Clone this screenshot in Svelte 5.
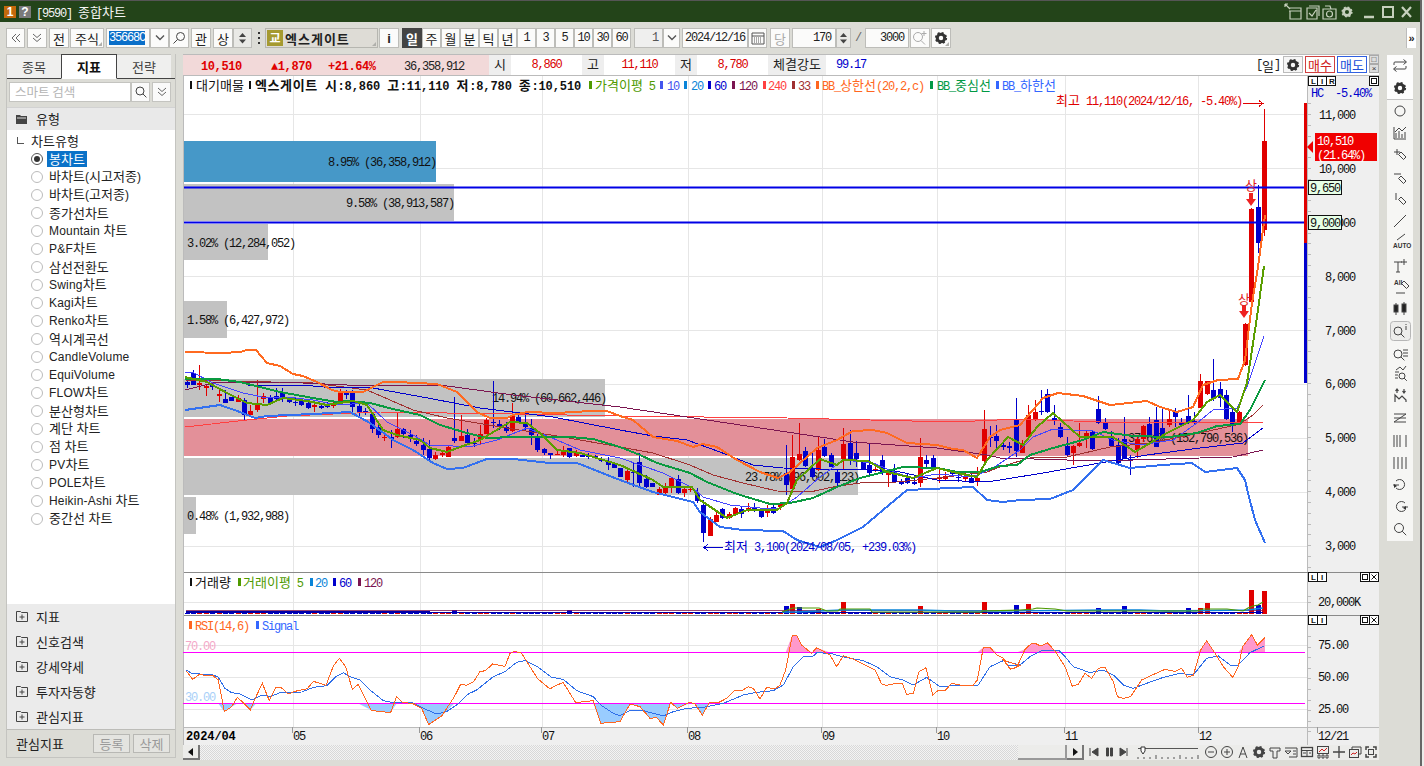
<script>
  const parse = (s) => s.trim().split(/\s+/).map((p) => p.split(',').map(Number));
  const pts = (arr) => arr.map((p) => p.join(',')).join(' ');
  const zoomPts = (s, ox, oy) => parse(s).map(([x, y]) => [ox + x / 3, oy + y / 3]);

  function parts(s) {
    return (s.match(/[\uAC00-\uD7A3]+|[^\uAC00-\uD7A3]+/g) || []).map((t) => ({
      t,
      k: /[\uAC00-\uD7A3]/.test(t)
    }));
  }

  const bbUp = parse(`185,352 223,353 240,352 247,350 256,350 267,363 280,366 293,374 303,376 317,382 332,390 340,392 363,392 383,382 397,382 437,384 457,392 467,402 477,412 490,418 507,418 513,415 527,412 557,413 590,411 607,411 620,416 633,420 653,437 677,441 693,447 703,444 717,447 737,460 760,472 778,478 790,472 817,448 837,440 853,431 873,430 887,433 907,443 937,445 953,449 963,450 977,458 990,437 1000,430 1020,425 1033,410 1043,398 1058,393 1083,396 1110,405 1147,401 1160,407 1177,412 1193,407 1203,385 1218,380 1238,379 1245,360 1252,303 1258,267 1265,215`);
  const bbMid = parse(`185,379 217,379 240,382 280,392 313,398 337,402 350,401 370,403 393,409 420,415 440,425 467,433 487,438 513,437 570,437 593,439 620,447 640,455 657,463 690,473 707,482 737,494 770,504 790,503 813,498 837,487 860,478 880,473 903,467 937,468 957,472 980,472 1000,466 1017,465 1030,455 1053,448 1083,440 1103,432 1133,436 1170,437 1197,433 1217,426 1240,424 1250,410 1265,380`);
  const bbLow = parse(`185,410 220,405 240,412 255,418 267,416 313,414 350,412 370,423 393,440 413,450 433,463 447,469 463,468 487,459 513,459 550,463 577,463 620,480 653,492 693,502 700,512 720,527 743,530 783,531 797,540 820,547 837,540 863,527 883,510 907,490 973,487 987,500 1003,502 1020,500 1050,499 1073,490 1090,473 1103,460 1130,468 1163,465 1192,463 1205,472 1237,468 1245,480 1248,493 1255,520 1265,543`);
  const ma5 = parse(`185,377 207,382 227,393 247,403 267,405 283,398 307,401 327,405 353,401 367,405 383,430 397,435 420,440 430,448 447,452 463,446 480,440 510,422 527,423 540,433 557,450 580,453 620,465 653,480 663,487 692,487 700,500 727,518 747,510 777,510 787,503 797,480 820,459 837,465 843,460 868,461 887,472 913,478 937,468 957,473 977,477 987,460 1008,437 1023,445 1037,427 1053,413 1080,437 1100,437 1113,437 1135,452 1167,433 1193,420 1207,402 1220,395 1237,412 1247,383 1257,317 1264,266`);
  const ma10 = parse(`185,372 192,372 213,383 243,393 267,398 287,397 313,400 337,405 367,403 387,422 413,435 430,445 453,446 473,446 497,440 527,428 557,440 580,450 620,458 663,473 693,488 703,497 730,505 760,508 780,508 797,497 820,477 843,460 873,463 897,473 913,478 937,474 973,477 993,468 1020,450 1033,437 1053,429 1093,431 1113,440 1140,445 1173,440 1197,423 1213,410 1237,408 1247,387 1264,336`);
  const ma60 = parse(`248,385 303,385 323,387 373,388 433,399 480,408 553,417 620,430 653,436 687,440 720,452 753,465 783,468 820,469 853,469 900,472 937,480 987,482 1000,480 1043,473 1100,463 1147,455 1200,448 1243,443 1263,428`);
  const ma120 = parse(`185,390 213,383 280,382 347,385 440,385 513,395 620,407 687,417 787,432 853,442 937,448 987,455 1000,458 1100,461 1233,457 1263,450`);
  const ma240 = parse(`185,427 247,420 287,416 380,412 513,414 620,416 787,418 953,422 1020,419 1100,422 1233,423 1263,422`);
  const ma33 = parse(`185,380 313,383 367,390 413,410 447,418 513,429 563,437 620,447 653,453 690,465 713,475 743,483 777,491 810,492 833,487 860,483 897,482 937,478 987,472 1000,467 1033,457 1067,457 1110,447 1150,443 1200,433 1240,424 1253,415 1263,405`);

  const raw1 = `b125,135,115,145 b100,135,90,135 r128,135,75,150 r138,142,135,168 b135,140,125,150 r162,165,150,185 b177,188,150,190 b172,182,170,184 r175,185,165,185 b180,225,175,240 r212,225,195,230 r190,210,120,215 r167,178,160,190 b170,192,165,195 b168,176,145,180 b158,178,145,185 b178,186,176,188 b185,188,175,198 b183,195,175,198 b190,203,185,208 r195,200,185,215 b197,205,195,207 b197,200,185,205 r192,197,185,205 r160,183,148,190 b160,165,150,178 b160,200,150,215 b197,215,190,230 b212,217,205,225 b222,267,215,278 b262,285,245,295 r290,295,280,303 b292,298,270,325 r267,292,215,295 b267,283,265,295 b285,295,270,305 b302,312,285,318 b315,330,295,345 b328,355,300,360 r345,358,337,360 r340,346,330,350 r322,350,315,352 b295,303,170,310 r288,302,225,304 b285,308,268,310 b308,312,295,322 r282,297,255,312 r240,282,235,282 b245,250,122,265 b253,258,240,270 b262,272,245,280 r228,272,190,275 b232,245,218,250 b250,260,220,270 b263,285,237,315 b290,330,283,335 b326,338,325,345 b340,343,338,358 r341,344,328,346 r332,345,318,350 b325,352,323,354 r338,349,330,352 b345,350,343,352 b345,350,340,358 b347,350,345,352 b357,360,350,365 b362,375,350,390 b373,383,371,385 b385,410,383,412
  r392,420,388,425 b395,398,370,440 b365,430,340,440 b418,440,405,445 b430,440,428,442 r448,465,442,465 r445,458,430,465 r415,445,410,458 b417,458,405,462 r447,458,440,472 r446,449,437,455 b460,482,445,488 b495,578,480,605 r537,587,530,588 r525,545,510,547 b507,535,505,538 r522,535,515,538 r505,525,500,525 b507,522,497,533 r505,512,488,515 b503,510,490,515 b510,532,505,535 r510,520,495,530 b502,520,495,523 r488,502,485,510 b400,435,315,465 r350,447,285,448 r342,360,248,362 b333,378,320,380 b385,410,333,415 r330,390,290,392 b322,347,297,350 b345,380,340,382 b397,430,390,442 r312,358,265,390 b310,360,270,375 b340,358,303,380 b367,388,360,390 b375,400,313,408 r387,393,380,397 b360,400,345,405 r399,401,395,442 b402,426,373,427 b422,432,418,436 b415,430,402,432 b426,432,415,435 r350,428,295,440 b360,372,345,385 b353,382,345,385 r410,417,380,428 r408,416,395,420 b395,402,393,404 b410,415,400,425 r412,418,395,425 b415,428,395,430 r415,425,380,438 r267,362,210,365 b290,295,258,320 b287,303,255,325 b315,318,300,330 b318,320,305,340 b238,333,175,350`;
  const raw2 = `r1065,1088,1050,1090 r975,1040,945,1042 r965,990,930,992 b962,965,900,975 b912,965,897,968 b985,992,945,1005 b1010,1040,998,1045 b1068,1095,1040,1097 r1068,1090,1065,1125 r1060,1068,998,1072 r1030,1045,1022,1075 b1025,1077,1020,1080 b957,1000,918,1003 b995,1018,985,1020 b1040,1068,1022,1070 b1065,1120,1045,1122 b1048,1107,982,1108 b1107,1110,1095,1155 r1047,1080,1035,1105 r1008,1048,1005,1055 b1002,1040,982,1042 b990,1070,952,1072 b1015,1040,955,1042 r988,1005,960,1010 b965,982,955,1012 b998,1006,985,1010 b978,1000,915,1003 b992,1000,965,1005 r873,953,852,955 r873,913,872,915 b900,928,808,932 b898,925,875,950 b915,988,900,990 b965,1005,952,1025 r965,1003,963,1005 r702,825,700,828 r358,635,355,637 b350,458,285,488 r153,420,57,437`;
  const candleOf = (tok, oy) => {
    const n = tok.slice(1).split(',').map(Number);
    return { c: tok[0], t: oy + n[0] / 3, b: oy + n[1] / 3, wt: oy + n[2] / 3, wb: oy + n[3] / 3 };
  };
  const candles = [
    ...raw1.trim().split(/\s+/).map((t) => candleOf(t, 340)),
    ...raw2.trim().split(/\s+/).map((t) => candleOf(t, 90))
  ].map((c, i) => ({ ...c, x: Math.round(186.7 + i * 6.376) }));
  const up = '#e00000';
  const dn = '#0000cc';

  const volBig = { 42: 3, 60: 3, 94: 7, 95: 9, 96: 6, 99: 4, 103: 11, 115: 7, 125: 11, 130: 8, 132: 9, 143: 5, 147: 7, 157: 5, 159: 5, 160: 10, 167: 23, 168: 8, 169: 22 };
  const volBars = candles.map((c, i) => ({ x: c.x, c: i === 96 || i === 168 ? dn : c.c === 'r' ? up : dn, h: volBig[i] || 0 }));

  const rsi = [
    ...zoomPts(`18,302 38,328 60,312 78,318 98,316 115,330 133,425 155,410 172,382 192,400 211,420 228,380 247,340 268,392 287,352 305,354 325,372 345,364 382,356 400,334 438,346 460,288 478,265 497,290 517,358 535,343 573,420 600,425 632,427 650,380 668,398 697,400 725,415 746,464 785,438 823,380 842,343 860,346 880,336 900,305 916,302 938,282 975,289 990,250 1005,244 1025,250 1072,325 1110,357 1130,345 1150,338 1187,398 1240,392 1262,460 1320,455`, 180, 570),
    ...zoomPts(`30,402 60,410 90,445 110,443 130,465 152,397 172,415 208,397 225,402 247,435 268,398 295,398 320,385 345,360 365,362 385,350 400,355 420,387 440,352 465,357 480,345 497,300 517,195 530,197 545,225 575,250 590,233 630,255 650,290 670,257 700,267 740,287 765,300 785,342 800,346 830,340 847,340 860,373 880,370 897,305 918,293 938,375 955,361 975,362 995,340 1020,345 1060,345 1072,330 1090,232 1110,232 1130,255 1150,265 1170,298 1200,287`, 620, 570),
    ...zoomPts(`10,270 30,297 50,293 75,238 95,220 105,220 122,228 142,218 165,243 195,290 217,349 235,343 255,310 275,325 295,295 315,292 340,335 352,380 370,385 392,380 425,330 450,318 495,298 525,304 545,295 562,322 580,316 602,240 620,212 645,250 670,290 698,322 715,290 728,230 755,194 772,225 795,202`, 1000, 570)
  ];
  const signal = [
    ...zoomPts(`18,300 35,310 70,313 100,315 115,322 135,355 155,368 180,372 215,390 245,375 270,380 300,368 365,366 400,352 440,347 470,318 490,308 510,320 540,330 570,360 610,392 640,398 697,398 730,415 770,432 800,425 830,405 865,372 890,360 940,320 975,305 1010,277 1035,272 1075,292 1115,322 1150,328 1190,362 1240,380 1262,405 1300,430 1320,437`, 180, 570),
    ...zoomPts(`30,422 70,422 130,438 160,425 200,415 250,412 310,400 370,375 410,367 460,362 490,345 520,290 550,260 580,258 590,248 630,250 680,263 730,272 770,290 810,320 850,330 880,345 920,322 960,350 1000,347 1075,345 1110,290 1150,272 1200,285`, 620, 570),
    ...zoomPts(`25,285 60,285 90,260 130,240 175,240 195,260 220,290 270,308 310,300 340,315 370,345 400,355 440,340 490,322 540,310 580,315 620,265 655,258 690,285 715,285 750,248 792,228`, 1000, 570)
  ];
  const rsiHi = [[rsi[0][0], 652.5], ...rsi.map(([x, y]) => [x, Math.min(y, 652.5)]), [rsi[rsi.length - 1][0], 652.5]];
  const rsiLo = [[rsi[0][0], 703.5], ...rsi.map(([x, y]) => [x, Math.max(y, 703.5)]), [rsi[rsi.length - 1][0], 703.5]];

  const vGreen = parse(`782,612 790,609 793,608 819,608 827,611 838,611 840,609 870,609 872,612 982,612 982,611 1020,610 1033,609 1037,608 1055,609 1067,611 1197,611 1203,609 1227,609 1243,611 1248,608 1253,606 1258,605 1263,602`);
  const vSky = parse(`782,612 797,612 842,610 920,610 953,611 1000,611 1107,610 1140,610 1167,611 1247,610 1263,608`);

  const vGrid = [293, 420, 542, 688, 822, 937, 1065, 1198];
  const hGrid = [114, 168, 222, 276, 330, 384, 438, 492, 546];
  const priceLabels = [[119, '11,000'], [173, '10,000'], [227, '9,000'], [281, '8,000'], [335, '7,000'], [388, '6,000'], [442, '5,000'], [496, '4,000'], [550, '3,000']];
  const priceTicks = Array.from({ length: 44 }, (_, i) => 103.2 + i * 10.78);
  const rsiTicks = Array.from({ length: 10 }, (_, i) => 636 + i * 10.6);
  const dateLabels = [[293, '05'], [420, '06'], [542, '07'], [688, '08'], [822, '09'], [937, '10'], [1065, '11'], [1199, '12'], [1318, '12/21']];

  const bands = [
    { x: 183, y: 141, w: 253, h: 41, f: '#4698c8', tx: 328, label: '8.95% (36,358,912)' },
    { x: 183, y: 184, w: 271, h: 37, f: '#c2c2c2', tx: 346, label: '9.58% (38,913,587)' },
    { x: 183, y: 224, w: 85, h: 36, f: '#c2c2c2', tx: 187, label: '3.02% (12,284,052)' },
    { x: 183, y: 301, w: 44, h: 37, f: '#c2c2c2', tx: 187, label: '1.58% (6,427,972)' },
    { x: 183, y: 379, w: 422, h: 38, f: '#c2c2c2', tx: 492, label: '14.94% (60,662,446)' },
    { x: 183, y: 419, w: 1065, h: 37, f: '#e39099', tx: 1128, label: '37.61% (152,790,536)' },
    { x: 183, y: 458, w: 675, h: 37, f: '#c2c2c2', tx: 745, label: '23.78% (96,602,123)' },
    { x: 183, y: 497, w: 13, h: 37, f: '#c2c2c2', tx: 187, label: '0.48% (1,932,988)' }
  ];

  const legendMain = [
    [589, 595, '#4f9a00', '가격이평 5'],
    [660, 667, '#4455ee', '10'],
    [684, 691, '#0a84d8', '20'],
    [708, 714, '#0000cc', '60'],
    [732, 739, '#7b1550', '120'],
    [763, 768, '#ff4040', '240'],
    [792, 798, '#a03030', '33'],
    [816, 822, '#ff6620', 'BB_상한선(20,2,c)'],
    [930, 937, '#009944', 'BB_중심선'],
    [996, 1002, '#3366ff', 'BB_하한선']
  ];
  const legendVol = [
    [238, 243, '#4f9a00', '거래이평 5'],
    [310, 315, '#0a84d8', '20'],
    [333, 339, '#0000cc', '60'],
    [358, 364, '#7b1550', '120']
  ];

  const tree = ['봉차트', '바차트(시고저종)', '바차트(고저종)', '종가선차트', 'Mountain 차트', 'P&F차트', '삼선전환도', 'Swing차트', 'Kagi차트', 'Renko차트', '역시계곡선', 'CandleVolume', 'EquiVolume', 'FLOW차트', '분산형차트', '계단 차트', '점 차트', 'PV차트', 'POLE차트', 'Heikin-Ashi 차트', '중간선 차트'];
  const accordion = ['지표', '신호검색', '강세약세', '투자자동향', '관심지표'];
  const periods = ['주', '월', '분', '틱', '년'];
  const minutes = ['1', '3', '5', '10', '30', '60'];
</script>

{#snippet t(s)}{#each parts(s) as p}<span class={p.k ? 'kr' : 'num'}>{p.t}</span>{/each}{/snippet}

{#snippet st(x, y, s, fill, cls = '')}
  <text {x} {y} {fill} class="svgt {cls}">{#each parts(s) as p}<tspan class={p.k ? 'kr' : 'num'}>{p.t}</tspan>{/each}</text>
{/snippet}

{#snippet gear(cx, cy, r, col)}
  <circle {cx} {cy} r={r * 0.62} fill="none" stroke={col} stroke-width={r * 0.5} />
  <circle {cx} {cy} r={r * 0.87} fill="none" stroke={col} stroke-width={r * 0.3} stroke-dasharray={(2 * Math.PI * r * 0.87) / 16} />
{/snippet}

{#snippet arrows()}
  <svg class="ar" width="9" height="16" viewBox="0 0 9 16"><path d="M1 7l3.5-4L8 7zM1 9.500l3.500 4L8 9.500z" fill="#444" /></svg>
{/snippet}

{#snippet chev()}
  <svg width="10" height="8" viewBox="0 0 10 8"><path d="M1 1.500l4 4 4-4" fill="none" stroke="#555" stroke-width="1.400" /></svg>
{/snippet}

{#snippet dbl(up)}
  <svg width="10" height="10" viewBox="0 0 10 10">
    {#if up === 'l'}
      <path d="M5 1L1 5l4 4M9 1L5 5l4 4" fill="none" stroke="#666" />
    {:else if up === 'r'}
      <path d="M1 1l4 4-4 4M5 1l4 4-4 4" fill="none" stroke="#333" stroke-width="1.200" />
    {:else}
      <path d="M1 1l4 3.500L9 1M1 5l4 3.500L9 5" fill="none" stroke="#666" />
    {/if}
  </svg>
{/snippet}

{#snippet mag(cx, cy, r, sw)}
  <circle {cx} {cy} {r} fill="none" stroke="#444" stroke-width={sw} />
  <path d="M{cx + r * 0.7} {cy + r * 0.7}l{r * 0.9} {r * 0.9}" stroke="#444" stroke-width={sw} />
{/snippet}

{#snippet eraser(x, y)}
  <path d="M{x} {y}l5 5-2.500 2.500-5-5z" fill="none" stroke="#444" />
{/snippet}

<div class="page">
  <div class="win">
    <header class="title">
      <span class="sq one">1</span>
      <span class="sq q">?</span>
      <span class="ttl">{@render t('[9590] 종합차트')}</span>
      <div class="winbtns">
        <svg width="132" height="18" viewBox="0 0 132 18">
          <g fill="none" stroke="#c6d0bd" stroke-width="1.200">
            <path d="M6 5h12v11H7V8M6 8h12M2 1l5 5M2 1h3M2 1v3" />
            <path d="M24 5h10v11H24zM26 3h10v10M26 10l3 3 4-6" />
            <path d="M40 6h13v10H40zM42 3h5l1 3" /><circle cx="46.500" cy="11" r="3" />
          </g>
          {@render gear(64, 9, 5.500, '#c6d0bd')}
          <path d="M81 14h10" stroke="#c6d0bd" stroke-width="2.500" />
          <rect x="100" y="4" width="10" height="10" fill="none" stroke="#c6d0bd" stroke-width="2" />
          <path d="M119 4l9 10M128 4l-9 10" stroke="#c6d0bd" stroke-width="2.200" />
        </svg>
      </div>
    </header>

    <div class="toolbar">
      <div class="btn w19">{@render dbl('l')}</div>
      <div class="btn w20 ml2">{@render dbl('d')}</div>
      <div class="btn w20 ml2">{@render t('전')}</div>
      <div class="btn w34 ml1 corner">{@render t('주식')}</div>
      <div class="btn w44 ml2 code"><span class="sel">35668C</span></div>
      <div class="btn w19">{@render chev()}</div>
      <div class="btn w20">
        <svg width="14" height="14" viewBox="0 0 14 14"><circle cx="8.500" cy="5.500" r="4" fill="none" stroke="#444" /><path d="M5.500 8.500L1.500 12.500" stroke="#444" /></svg>
      </div>
      <div class="btn w20 ml2">{@render t('관')}</div>
      <div class="btn w20 ml2">{@render t('상')}</div>
      <div class="btn w19 spin">{@render arrows()}</div>
      <div class="dots"><i></i><i></i><i></i></div>
      <div class="stock corner">
        <span class="kyo">교</span><b class="kr">엑스게이트</b>
      </div>
      <div class="btn w20 ml1 info">i</div>
      <div class="btn w20 ml3 dark">{@render t('일')}</div>
      {#each periods as p}<div class="btn w19">{@render t(p)}</div>{/each}
      {#each minutes as m}<div class="btn w19">{@render t(m)}</div>{/each}
      <div class="btn w29 ml3 grayin rightnum">{@render t('1')}</div>
      <div class="btn w17">{@render chev()}</div>
      <div class="btn w66 ml2">{@render t('2024/12/16')}</div>
      <div class="btn w19">
        <svg width="14" height="13" viewBox="0 0 14 13"><path d="M1 1h12v11H1zM1 4h12" fill="none" stroke="#555" /><path d="M3 6h8M3 8h8M3 10h8" stroke="#555" stroke-dasharray="1 1" /></svg>
      </div>
      <div class="btn w20 ml3 mute">{@render t('당')}</div>
      <div class="btn w44 ml2 rightnum">{@render t('170')}</div>
      <div class="btn w15 spin">{@render arrows()}</div>
      <div class="slash">{@render t('/')}</div>
      <div class="btn w44 rightnum">{@render t('3000')}</div>
      <div class="btn w20 ml1">
        <svg width="18" height="16" viewBox="0 0 18 16"><circle cx="7" cy="7" r="4.500" fill="none" stroke="#aaa" /><path d="M10 10.500l4 4M13 1v5M10.500 3.500h5" stroke="#aaa" /></svg>
      </div>
      <div class="btn w20 ml1 corner">
        <svg width="14" height="14" viewBox="0 0 14 14">{@render gear(7, 7, 6, '#333')}</svg>
      </div>
      <div class="more">»</div>
    </div>

    <div class="body">
      <aside class="side">
        <div class="tabs">
          <div class="tab">{@render t('종목')}</div>
          <div class="tab on">{@render t('지표')}</div>
          <div class="tab">{@render t('전략')}</div>
          <div class="tabrest"></div>
        </div>
        <div class="search">
          <div class="sinput">스마트 검색</div>
          <div class="sbtn">
            <svg width="14" height="14" viewBox="0 0 14 14">{@render mag(6, 6, 4, 1)}</svg>
          </div>
          <div class="sbtn alt">{@render dbl('d')}</div>
        </div>
        <div class="treehead">
          <svg width="11" height="10" viewBox="0 0 11 10"><path d="M0 1h4l1 1h6v8H0z" fill="#444" /><path d="M1 4h9" stroke="#ddd" /></svg>
          <span class="kr">유형</span>
        </div>
        <div class="tree">
          <div class="root"><span class="elbow"></span><span class="kr">차트유형</span></div>
          {#each tree as item, i}
            <div class="item">
              <span class="radio" class:checked={i === 0}></span>
              <span class="lbl" class:sel={i === 0}>{#each parts(item) as p}<span class={p.k ? 'kr' : 'lat'}>{p.t}</span>{/each}</span>
            </div>
          {/each}
        </div>
        <div class="acc">
          {#each accordion as a}
            <div class="accrow">
              <svg width="12" height="11" viewBox="0 0 12 11"><path d="M.5 .5h4l1 1h6v9H.5zM6 3.500v5M3.500 6h5" fill="none" stroke="#444" /></svg>
              <span class="kr">{a}</span>
            </div>
          {/each}
        </div>
        <div class="sidefoot">
          <span class="kr">관심지표</span>
          <div class="fbtn kr">등록</div>
          <div class="fbtn kr">삭제</div>
        </div>
      </aside>

      <main class="chart">
        <div class="infobar">
          <div class="quote">
            <span class="q1">{@render t('10,510')}</span>
            <span class="q2">{@render t('▲1,870')}</span>
            <span class="q3">{@render t('+21.64%')}</span>
            <span class="q4">{@render t('36,358,912')}</span>
          </div>
          <div class="cell key w22 kr">시</div><div class="cell val w71 red">{@render t('8,860')}</div>
          <div class="cell key w22 kr">고</div><div class="cell val w71 red">{@render t('11,110')}</div>
          <div class="cell key w22 kr">저</div><div class="cell val w71 red">{@render t('8,780')}</div>
          <div class="cell key w58 kr">체결강도</div><div class="cell val w50 blue">{@render t('99.17')}</div>
          <div class="fill"></div>
          <div class="ilabel">{@render t('[일]')}</div>
          <div class="ibtn">
            <svg width="14" height="14" viewBox="0 0 14 14">{@render gear(7, 7, 6, '#333')}</svg>
          </div>
          <div class="ibtn buy kr">매수</div>
          <div class="ibtn sell kr">매도</div>
          <div class="mini">
            <span class="mb">□</span>
            <span class="mb">×</span>
          </div>
        </div>

        <svg class="plot" width="1196" height="670" viewBox="183 75 1196 670">
          <rect x="183" y="75" width="1196" height="670" fill="#fff" />
          <rect x="1308" y="76" width="71" height="669" fill="#efefef" />
          <rect x="183" y="728" width="1125" height="17" fill="#efefef" />

          <g stroke="#e6e6e6" shape-rendering="crispEdges">
            {#each vGrid as x}<path d="M{x + 0.5} 76V727" />{/each}
            {#each hGrid as y}<path d="M183 {y + 0.5}H1307" />{/each}
            <path d="M183 602.500H1307M183 645.500H1307M183 677.500H1307M183 709.500H1307" />
          </g>

          {#each bands as b}
            <rect x={b.x} y={b.y} width={b.w} height={b.h} fill={b.f} shape-rendering="crispEdges" />
          {/each}
          {#each bands as b}
            {@render st(b.tx, b.y + (b.h === 41 ? 25 : 23), b.label, '#111')}
          {/each}

          <g shape-rendering="crispEdges">
            {#each candles as c}
              <path d="M{c.x + 0.5} {c.wt}V{c.wb}" stroke={c.c === 'r' ? up : dn} stroke-width="1" />
              <rect x={c.x - 2} y={c.t} width="5" height={Math.max(c.b - c.t, 1.5)} fill={c.c === 'r' ? up : dn} />
            {/each}
          </g>

          <g fill="none" stroke-linejoin="round" shape-rendering="crispEdges">
            <polyline points={pts(ma240)} stroke="#ff4040" stroke-width="1" />
            <polyline points={pts(ma33)} stroke="#a03030" stroke-width="1" />
            <polyline points={pts(ma120)} stroke="#7b1550" stroke-width="1" />
            <polyline points={pts(ma60)} stroke="#0000cc" stroke-width="1" />
            <polyline points={pts(ma10)} stroke="#4444ff" stroke-width="1" />
            <polyline points={pts(bbLow)} stroke="#3370f0" stroke-width="2" />
            <polyline points={pts(bbMid)} stroke="#0a9a40" stroke-width="2" />
            <polyline points={pts(ma5)} stroke="#5a9e00" stroke-width="2" />
            <polyline points={pts(bbUp)} stroke="#ff6a20" stroke-width="2" />
          </g>

          <path d="M183 187.500H1307M183 222.500H1307" stroke="#0000e6" stroke-width="2" />
          <rect x="1304" y="103" width="3" height="140" fill="#e00000" />
          <rect x="1304" y="243" width="3" height="140" fill="#0000cc" />

          <path d="M1244 311l3 0v-6h4v6h3l-5 7z" fill="#ee2222" transform="translate(-5 0)" />
          <path d="M1251 199h3v-6h4v6h3l-5 7z" fill="#ee2222" transform="translate(-5 0)" />
          {@render st(1238, 304, '상', '#e02020')}
          {@render st(1245, 190, '상', '#e02020')}

          <g stroke="#bbb" shape-rendering="crispEdges">
            <path d="M1307.500 75V745M183 727.500H1379M183 75.500H1379" />
            {#each priceTicks as y}<path d="M1307 {Math.round(y) + 0.5}h4" />{/each}
            {#each rsiTicks as y}<path d="M1307 {Math.round(y) + 0.5}h4" />{/each}
            <path d="M1307 596.500h4M1307 602.500h4" />
          </g>
          <path d="M183 572.500H1379M183 615.500H1379" stroke="#8a8a8a" shape-rendering="crispEdges" />
          <path d="M183.500 75V745" stroke="#bbb" shape-rendering="crispEdges" />

          <!-- legend -->
          <rect x="190" y="81" width="2" height="8" fill="#111" />
          {@render st(196, 90, '대기매물', '#111')}
          <rect x="249" y="81" width="2" height="8" fill="#111" />
          {@render st(255, 90, '엑스게이트 시:8,860 고:11,110 저:8,780 종:10,510', '#111', 'bold')}
          {#each legendMain as [rx, tx, col, s]}
            <rect x={rx} y="81" width="3" height="8" fill={col} />
            {@render st(tx, 90, s, col)}
          {/each}
          {@render st(1056, 105, '최고 11,110(2024/12/16, -5.40%)', '#e00000')}
          <path d="M1243 103.500H1263M1259 100.500l4 3-4 3" stroke="#e00000" fill="none" shape-rendering="crispEdges" />
          {@render st(724, 551, '최저 3,100(2024/08/05, +239.03%)', '#0000cc')}
          <path d="M704 547.500H723M708 544.500l-4 3 4 3" stroke="#0000cc" fill="none" shape-rendering="crispEdges" />

          <!-- price axis -->
          {#each priceLabels as [y, s]}
            <text x="1355" {y} text-anchor="end" class="svgt"><tspan class="num" fill="#111">{s}</tspan></text>
          {/each}
          <polygon points="1307,147 1313,141 1313,153" fill="#f00000" />
          <rect x="1315" y="133" width="62" height="28" fill="#f00000" />
          {@render st(1317, 145, '10,510', '#fff')}
          {@render st(1317, 159, '(21.64%)', '#fff')}
          <rect x="1308.500" y="180.500" width="33" height="14" fill="#e6ffe6" stroke="#111" />
          {@render st(1310, 192, '9,650', '#111')}
          <rect x="1308.500" y="215.500" width="33" height="14" fill="#e6ffe6" stroke="#111" />
          {@render st(1310, 227, '9,000', '#111')}
          {@render st(1311, 97, 'HC  -5.40%', '#0000cc')}

          {#snippet boxes(y, withR)}
            <g fill="#fff" stroke="#111" shape-rendering="crispEdges">
              <rect x="1308.500" y={y + 0.5} width="9" height="9" />
              <rect x="1317.500" y={y + 0.5} width="9" height="9" />
              {#if withR}<rect x="1326.500" y={y + 0.5} width="9" height="9" />{/if}
            </g>
            <text x="1311" y={y + 8} class="tiny">L</text>
            <text x="1321" y={y + 8} class="tiny">I</text>
            {#if withR}<text x="1329" y={y + 8} class="tiny">R</text>{/if}
          {/snippet}
          {@render boxes(76, true)}
          <rect x="1369.500" y="76.500" width="9" height="9" fill="#fff" stroke="#111" shape-rendering="crispEdges" />
          <rect x="1371.500" y="78.500" width="5" height="5" fill="none" stroke="#111" shape-rendering="crispEdges" />
          {#each [572, 615] as y}
            {@render boxes(y, false)}
            <g fill="#fff" stroke="#111" shape-rendering="crispEdges">
              <rect x="1360.500" y={y + 0.5} width="9" height="9" />
              <rect x="1369.500" y={y + 0.5} width="9" height="9" />
              <rect x="1362.500" y={y + 2.5} width="5" height="5" fill="none" />
            </g>
            <path d="M1371.500 {y + 2.5}l5 5M1376.500 {y + 2.5}l-5 5" stroke="#111" />
          {/each}

          <!-- volume -->
          <rect x="190" y="578" width="2" height="8" fill="#111" />
          {@render st(195, 587, '거래량', '#111')}
          {#each legendVol as [rx, tx, col, s]}
            <rect x={rx} y="578" width="3" height="8" fill={col} />
            {@render st(tx, 587, s, col)}
          {/each}
          <g shape-rendering="crispEdges">
            {#each volBars as v}
              <rect x={v.x - 2} y={613 - v.h} width="5" height={v.h + 1} fill={v.c} />
            {/each}
          </g>
          <rect x="186" y="611" width="244" height="2" fill="#0000a8" />
          <path d="M430 612.500H1263" stroke="#0000a8" />
          <path d="M186 610.500H1263" stroke="#7b1550" stroke-width="0.800" />
          <polyline points={pts(vSky)} fill="none" stroke="#0a84d8" stroke-width="1.300" />
          <polyline points={pts(vGreen)} fill="none" stroke="#4f9a00" stroke-width="1.200" />
          <text x="1360" y="606" text-anchor="end" class="svgt"><tspan class="num" fill="#111">20,000K</tspan></text>

          <!-- RSI -->
          <rect x="189" y="621" width="3" height="8" fill="#ff6620" />
          {@render st(195, 630, 'RSI(14,6)', '#ff6620')}
          <rect x="256" y="621" width="3" height="8" fill="#3366ff" />
          {@render st(262, 630, 'Signal', '#3366ff')}
          {@render st(185, 650, '70.00', '#f4a8c8')}
          {@render st(185, 701, '30.00', '#a8d0f8')}
          <polygon points={pts(rsiHi)} fill="#ff99cc" />
          <polygon points={pts(rsiLo)} fill="#99ccff" />
          <path d="M183 652.500H1305M183 703.500H1305" stroke="#ff00ff" stroke-width="1.200" />
          <polyline points={pts(signal)} fill="none" stroke="#2e6ee8" stroke-width="1" shape-rendering="crispEdges" />
          <polyline points={pts(rsi)} fill="none" stroke="#ff6620" stroke-width="1" shape-rendering="crispEdges" />
          <text x="1348" y="649" text-anchor="end" class="svgt"><tspan class="num" fill="#111">75.00</tspan></text>
          <text x="1348" y="681" text-anchor="end" class="svgt"><tspan class="num" fill="#111">50.00</tspan></text>
          <text x="1348" y="713" text-anchor="end" class="svgt"><tspan class="num" fill="#111">25.00</tspan></text>

          <!-- date axis -->
          <text x="186" y="740" class="svgt bold"><tspan class="num" fill="#000">2024/04</tspan></text>
          {#each dateLabels as [x, s]}
            <path d="M{x - 0.5} 727v6" stroke="#999" shape-rendering="crispEdges" />
            <text {x} y="740" class="svgt"><tspan class="num" fill="#111">{s}</tspan></text>
          {/each}
        </svg>

        <div class="scroll">
          <div class="sb">
            <svg width="6" height="8" viewBox="0 0 6 8"><path d="M5 0L0 4l5 4z" fill="#111" /></svg>
          </div>
          <div class="track"></div>
          <div class="thumb"></div>
          <div class="sb">
            <svg width="6" height="8" viewBox="0 0 6 8"><path d="M1 0l5 4-5 4z" fill="#111" /></svg>
          </div>
          <svg class="ctl" width="295" height="15" viewBox="1084 745 295 15">
            <g fill="#444" stroke="#444">
              <path d="M1090 748v8M1098 748l-6 4 6 4z" />
              <path d="M1106.500 748h2v8h-2zM1110.500 748h2v8h-2z" />
              <path d="M1127 748v8M1120 748l6 4-6 4z" />
            </g>
            <path d="M1138 748.500H1198" stroke="#555" />
            <path d="M1141 747h4v4l-2 3-2-3z" fill="#fff" stroke="#333" />
            <path d="M1138 759v-2M1144 759v-2M1150 759v-2M1156 759v-4M1162 759v-2M1168 759v-2M1174 759v-2M1180 759v-4M1186 759v-2M1192 759v-2M1198 759v-4" stroke="#555" />
            <g fill="none" stroke="#444">
              <circle cx="1211" cy="752" r="5.500" /><path d="M1208 752h6" />
              <circle cx="1227" cy="752" r="5.500" /><path d="M1224 752h6M1227 749v6" />
              <path d="M1239 758l4-11 4 11M1240.500 754h5" />
              <path d="M1270 748h10v3h-3v7h-4v-7h-3z" />
              <path d="M1285 748h12v9h-8M1285 751h6l-3 3-3-3M1293 751h3M1293 754h3" />
              <rect x="1301.500" y="747.500" width="11" height="9" stroke-width="1.300" /><path d="M1301 750.500h11M1307 751v6M1303 753h3M1309 753h2" />
              <rect x="1317.500" y="746.500" width="11" height="7" /><path d="M1319 752l3-3 2 2 3-3" stroke="#d02020" /><path d="M1318 755h2v3h-2zM1322 755h2v3h-2zM1326 755h2v3h-2z" />
              <path d="M1333 752h12M1339 746v12" stroke-width="1.300" />
              <rect x="1349.500" y="749.500" width="9" height="8" /><path d="M1352 749v-2h9v7h-2" /><path d="M1351 755l2-2 2 1 2-2" stroke="#d02020" />
              <path d="M1366 750v-3h3M1373 747h3v3M1366 754v3h3M1376 754v3h-3" stroke-width="1.500" /><rect x="1368.500" y="749.500" width="5" height="5" />
            </g>
            {@render gear(1259, 752, 6, '#444')}
          </svg>
        </div>
      </main>

      <nav class="tools">
        <svg width="26" height="486" viewBox="1387 55 26 486">
          <rect x="1387" y="55" width="26" height="486" fill="#f6f6f4" />
          <rect x="1387" y="55" width="26" height="44" fill="#fdfdfd" />
          <path d="M1387 99.500H1413" stroke="#c4c4c4" />
          <rect x="1390.500" y="321.500" width="20" height="19" rx="3" fill="#ededeb" stroke="#b6b6b6" />
          <g fill="none" stroke="#444" stroke-width="1">
            <path d="M1394 65v-2q0-1 1-1h11M1403.500 59.500l3 2.500-3 2.500M1406 66v2q0 1-1 1h-11M1396.500 66.500l-3 2.500 3 2.500" />
            <circle cx="1400" cy="111" r="5" />
            <path d="M1394 127v12h12M1396 138v-5M1399 138v-7M1402 138v-4M1405 138v-6M1395 132l4-4 3 3 4-4" />
            <path d="M1394 152h6M1397 149v6" /><g transform="translate(1401 152)">{@render eraser(0, 0)}</g>
            <path d="M1394 174h7" /><g transform="translate(1401 176)">{@render eraser(0, 0)}</g>
            <path d="M1396 193v7" /><g transform="translate(1401 197)">{@render eraser(0, 0)}</g>
            <path d="M1394 227l12-12" />
            <path d="M1397 240l8-6" />
            <path d="M1394 262h8M1398 262v10M1396 272h4M1404 259v6M1401 262h6" />
            <g transform="translate(1404 281)">{@render eraser(0, 0)}</g><path d="M1396 293h9" />
            <path d="M1396 303v12M1404 302v13" /><rect x="1394" y="305" width="4" height="7" fill="#222" /><rect x="1402" y="304" width="4" height="8" fill="#222" />
            {@render mag(1398, 331, 4, 1)}
            <path d="M1406 326v4M1406 324v1" />
            {@render mag(1398, 354, 4, 1)}
            <path d="M1403 350h5M1403 353h5M1403 356h5" />
            <path d="M1395 372h4M1395 375h3M1395 378h3M1396 370l4-3 3 3 3-4" />{@render mag(1402, 376, 3, 1)}
            <path d="M1395 402v-7l4 4 3-3 4 4v2M1397 389v4M1404 393v-4M1395.500 391l1.500-2 1.500 2M1402.500 391l1.500 2 1.500-2" stroke-width="1.200" />
            <path d="M1394 414h12l-12 8h12M1394 418h12" />
            <path d="M1394 435v12M1397 435v12M1400 435v12M1406 435v12" />
            <path d="M1394 457v12M1398 457v12M1402 457v12M1406 457v12" />
            <path d="M1396 481a5 5 0 1 1 0 7M1393 485h6" />
            <path d="M1405 503a5 5 0 1 0 0 7M1402 507h6" />
            {@render mag(1399, 528, 4.500, 1)}
          </g>
          <path d="M1394 484l3 2-3 2zM1406 506l-3 2 3 2z" fill="#333" />
          {@render gear(1400, 88, 6, '#333')}
          <text x="1393" y="248" class="micro">AUTO</text>
          <text x="1394" y="285" class="micro">All</text>
        </svg>
      </nav>
    </div>
  </div>
</div>

<style>
  :global(body) {
    margin: 0;
    background: #ececea;
  }
  .page {
    width: 1424px;
    height: 766px;
    overflow: hidden;
    font-family: "Noto Sans CJK KR", "Liberation Sans", sans-serif;
    font-size: 13px;
    color: #222;
    background: #ececea;
  }
  .win {
    width: 1420px;
    height: 766px;
    background: #dcdcd6;
    border-right: 2px solid #666;
    box-sizing: content-box;
  }
  .kr {
    font-family: "Noto Sans CJK KR", sans-serif;
    font-size: 13px;
    letter-spacing: 0;
  }
  .num {
    font-family: "Liberation Mono", monospace;
    font-size: 12px;
    letter-spacing: -1.2px;
  }
  .lat {
    font-family: "Liberation Sans", sans-serif;
    font-size: 12px;
    letter-spacing: 0.2px;
  }

  .title {
    height: 21px;
    border-top: 1px solid #555;
    background: #234419;
    display: flex;
    align-items: center;
    color: #f4f4f4;
    padding-left: 4px;
    gap: 2px;
    position: relative;
  }
  .sq {
    width: 12px;
    height: 12px;
    display: flex;
    align-items: center;
    justify-content: center;
    font: bold 12px "Liberation Sans", sans-serif;
    color: #fff;
  }
  .one { background: #c4690c; }
  .q { background: #7a7a7a; margin-left: 1px; }
  .ttl { margin-left: 3px; }
  .winbtns {
    margin-left: auto;
    margin-right: 5px;
    display: flex;
  }

  .toolbar {
    display: flex;
    align-items: stretch;
    height: 20px;
    margin: 6px 0 6px 6px;
  }
  .btn {
    box-sizing: border-box;
    background: #fbfbfa;
    border: 1px solid #bdbdb9;
    display: flex;
    align-items: center;
    justify-content: center;
    position: relative;
    white-space: pre;
  }
  .w15 { width: 15px; }
  .w17 { width: 17px; }
  .w19 { width: 19px; }
  .w20 { width: 20px; }
  .w22 { width: 22px; }
  .w29 { width: 29px; }
  .w34 { width: 34px; }
  .w44 { width: 44px; }
  .w50 { width: 50px; }
  .w58 { width: 58px; }
  .w66 { width: 66px; }
  .w71 { width: 71px; }
  .ml1 { margin-left: 1px; }
  .ml2 { margin-left: 2px; }
  .ml3 { margin-left: 3px; }
  .corner::after {
    content: "";
    position: absolute;
    right: 1px;
    bottom: 1px;
    width: 0;
    height: 0;
    border-left: 4px solid transparent;
    border-bottom: 4px solid #b0b0ac;
  }
  .code { justify-content: flex-start; padding-left: 2px; overflow: hidden; }
  .code .sel {
    background: #0a6fc9;
    color: #fff;
    font: 12px/14px "Liberation Mono", monospace;
    letter-spacing: -1.2px;
  }
  .spin { background: #e9e9e6; }
  .dots {
    width: 13px;
    display: flex;
    flex-direction: column;
    align-items: center;
    justify-content: center;
    gap: 3px;
  }
  .dots i { width: 2px; height: 2px; background: #333; display: block; }
  .stock {
    width: 113px;
    box-sizing: border-box;
    border: 1px solid #b6b6b0;
    background: #dedcd6;
    display: flex;
    align-items: center;
    position: relative;
    gap: 2px;
    padding-left: 1px;
  }
  .kyo {
    width: 16px;
    height: 16px;
    background: #a59a30;
    color: #fff;
    font: bold 12px/16px "Noto Sans CJK KR", sans-serif;
    text-align: center;
  }
  .stock b { font-weight: 700; letter-spacing: 1px; }
  .info { font: bold 13px "Liberation Sans", sans-serif; }
  .dark { background: #444; color: #fff; border-color: #444; font-weight: 700; }
  .grayin { background: #efefee; color: #555; }
  .rightnum { justify-content: flex-end; padding-right: 4px; }
  .mute { color: #aaa; }
  .slash { width: 14px; display: flex; align-items: center; justify-content: center; color: #666; }
  .more {
    position: absolute;
    left: 1406px;
    top: 28px;
    width: 9px;
    height: 20px;
    background: #fff;
    border-left: 1px solid #bbb;
    font: bold 11px/20px "Liberation Sans", sans-serif;
    text-align: center;
  }

  .body {
    display: flex;
    align-items: flex-start;
    padding-left: 6px;
  }
  .side {
    width: 170px;
    height: 704px;
    box-sizing: border-box;
    border-right: 1px solid #c4c4c0;
    border-bottom: 1px solid #c4c4c0;
    border-left: 1px solid #c4c4c0;
    display: flex;
    flex-direction: column;
  }
  .tabs {
    display: flex;
    height: 25px;
    box-sizing: border-box;
    border-bottom: 1px solid #444;
  }
  .tab {
    flex: 0 0 54px;
    display: flex;
    align-items: center;
    justify-content: center;
    background: #efefee;
    color: #444;
    border-top: 1px solid #c4c4c0;
  }
  .tab.on {
    background: #fff;
    border: 1px solid #444;
    border-bottom: 1px solid #fff;
    height: 25px;
    flex: 0 0 56px;
    box-sizing: border-box;
    font-weight: 700;
    color: #111;
  }
  .tabrest { flex: 1; }
  .search {
    display: flex;
    height: 20px;
    margin: 3px 3px 5px 2px;
  }
  .sinput {
    width: 122px;
    box-sizing: border-box;
    background: #fff;
    border: 1px solid #c4c4c0;
    color: #b4b4b4;
    padding-left: 5px;
    line-height: 18px;
    font-size: 12.500px;
  }
  .sbtn {
    width: 19px;
    box-sizing: border-box;
    background: #fafafa;
    border: 1px solid #c4c4c0;
    display: flex;
    align-items: center;
    justify-content: center;
  }
  .sbtn.alt { margin-left: 2px; }
  .treehead {
    height: 22px;
    background: #e9e9e9;
    border-top: 1px solid #d2d2d2;
    display: flex;
    align-items: center;
    gap: 9px;
    padding-left: 9px;
  }
  .tree {
    background: #fff;
    height: 475px;
    box-sizing: border-box;
    padding-top: 2px;
  }
  .root {
    height: 18px;
    display: flex;
    align-items: center;
    padding-left: 24px;
    position: relative;
  }
  .elbow {
    position: absolute;
    left: 10px;
    top: 5px;
    width: 6px;
    height: 6px;
    border-left: 1px solid #555;
    border-bottom: 1px solid #555;
  }
  .item {
    height: 18px;
    display: flex;
    align-items: center;
    padding-left: 24px;
    gap: 4px;
  }
  .radio {
    width: 10px;
    height: 10px;
    border: 1px solid #bbb;
    border-radius: 50%;
    background: #fff;
    position: relative;
    flex: none;
  }
  .radio.checked { border-color: #555; }
  .radio.checked::after {
    content: "";
    position: absolute;
    left: 2px;
    top: 2px;
    width: 6px;
    height: 6px;
    border-radius: 50%;
    background: #333;
  }
  .lbl { padding: 0 2px; line-height: 16px; }
  .lbl.sel { background: #0a72c8; color: #fff; }
  .acc {
    background: #ebebeb;
    height: 125px;
  }
  .accrow {
    height: 25px;
    display: flex;
    align-items: center;
    gap: 8px;
    padding-left: 9px;
  }
  .sidefoot {
    height: 27px;
    background: #dcdcd6;
    border-top: 1px solid #bcbcb8;
    display: flex;
    align-items: center;
    padding-left: 9px;
  }
  .sidefoot > .kr:first-child { width: 77px; }
  .fbtn {
    width: 37px;
    height: 19px;
    box-sizing: border-box;
    margin-left: 3px;
    background: #e4e4e0;
    border: 1px solid #b8b8b4;
    color: #999;
    text-align: center;
    line-height: 17px;
  }
  .fbtn:nth-child(2) { margin-left: 0; }

  .chart {
    width: 1196px;
    margin-left: 7px;
    display: flex;
    flex-direction: column;
  }
  .infobar {
    height: 21px;
    box-sizing: border-box;
    border-top: 1px solid #bbb;
    background: #fff;
    display: flex;
    align-items: stretch;
  }
  .quote {
    width: 306px;
    background: #f2d9d9;
    position: relative;
    flex: none;
  }
  .quote span { position: absolute; top: 3px; line-height: 14px; white-space: pre; }
  .quote .num { position: static; }
  .q1 { left: 18px; color: #e00000; }
  .q2 { left: 88px; color: #e00000; }
  .q3 { left: 145px; color: #e00000; }
  .q1 .num, .q2 .num, .q3 .num { font-weight: 700; letter-spacing: -0.4px; }
  .q4 { left: 221px; color: #222; }
  .cell {
    display: flex;
    align-items: center;
    justify-content: center;
    flex: none;
  }
  .key {
    background: #eeeeee;
    box-sizing: border-box;
    padding-bottom: 3px;
  }
  .red { color: #d80000; }
  .blue { color: #0000cc; }
  .fill { flex: 1; }
  .ilabel {
    display: flex;
    align-items: center;
    color: #222;
    margin-right: 3px;
  }
  .ibtn {
    width: 20px;
    height: 17px;
    margin: 1px 2px 0 0;
    box-sizing: border-box;
    border: 1px solid #bbb;
    background: #f6f6f6;
    display: flex;
    align-items: center;
    justify-content: center;
  }
  .buy, .sell { width: 30px; background: #fff; }
  .buy { border-color: #d04040; color: #d02020; }
  .sell { border-color: #3060e0; color: #2050d8; }
  .mini {
    width: 10px;
    display: flex;
    flex-direction: column;
  }
  .mb {
    height: 9px;
    background: #ddd;
    border: 1px solid #aaa;
    box-sizing: border-box;
    font: 8px/7px "Liberation Sans", sans-serif;
    text-align: center;
    color: #333;
  }
  .plot { display: block; }
  .svgt { white-space: pre; }
  .svgt .kr { font-family: "Noto Sans CJK KR", sans-serif; font-size: 13px; }
  .bold { font-weight: 700; }
  .bold .num { letter-spacing: -0.1px; }
  .bold .kr { letter-spacing: 0.6px; }
  .tiny {
    font: bold 8px "Liberation Sans", sans-serif;
    fill: #111;
  }
  .micro {
    font: bold 6.500px "Liberation Sans", sans-serif;
    fill: #333;
  }
  .scroll {
    height: 15px;
    display: flex;
    align-items: stretch;
  }
  .sb {
    width: 17px;
    box-sizing: border-box;
    background: #ececea;
    border-right: 2px solid #777;
    border-bottom: 2px solid #777;
    display: flex;
    align-items: center;
    justify-content: center;
  }
  .track {
    flex: 1;
    background-color: #f4f4f4;
    background-image:
      linear-gradient(45deg, #d8d8d8 25%, transparent 25%, transparent 75%, #d8d8d8 75%),
      linear-gradient(45deg, #d8d8d8 25%, transparent 25%, transparent 75%, #d8d8d8 75%);
    background-size: 2px 2px;
    background-position: 0 0, 1px 1px;
  }
  .thumb {
    width: 49px;
    box-sizing: border-box;
    background: #ececea;
    border-right: 2px solid #999;
    border-bottom: 2px solid #999;
  }
  .ctl { flex: none; display: block; background: #ececea; }
  .tools {
    width: 26px;
    margin: 1px 0 0 8px;
  }
  .tools svg { display: block; }
</style>
